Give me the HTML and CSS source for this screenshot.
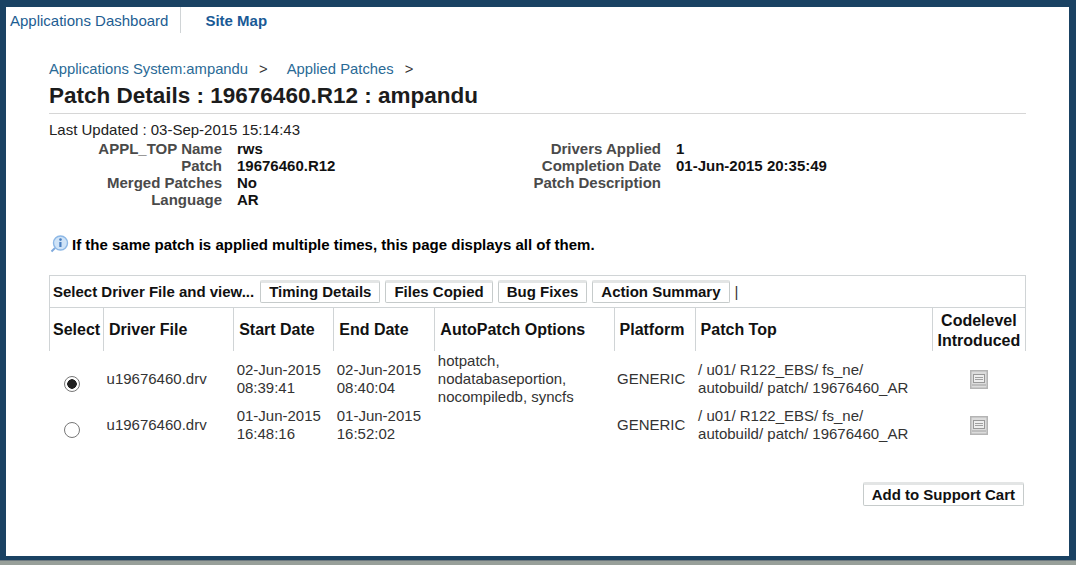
FILE: index.html
```html
<!DOCTYPE html>
<html lang="en">
<head>
<meta charset="utf-8">
<title>Patch Details</title>
<link rel="stylesheet" href="styles.css">
</head>
<body>
<div class="frame">
  <div class="page">
    <nav class="tabs">
      <a class="tab">Applications Dashboard</a>
      <a class="tab tab-active">Site Map</a>
    </nav>
    <main class="content">
      <div class="crumbs"><a>Applications System:ampandu</a><span class="sep">&gt;</span><a>Applied Patches</a><span class="sep">&gt;</span></div>
      <h1 class="title">Patch Details : 19676460.R12 : ampandu</h1>
      <div class="updated">Last Updated : 03-Sep-2015 15:14:43</div>
      <div class="details">
        <span class="lbl">APPL_TOP Name</span><span class="val">rws</span><span class="lbl">Drivers Applied</span><span class="val">1</span>
        <span class="lbl">Patch</span><span class="val">19676460.R12</span><span class="lbl">Completion Date</span><span class="val">01-Jun-2015 20:35:49</span>
        <span class="lbl">Merged Patches</span><span class="val">No</span><span class="lbl">Patch Description</span><span class="val"></span>
        <span class="lbl">Language</span><span class="val">AR</span><span></span><span></span>
      </div>
      <p class="tip">
        <svg class="tip-icon" width="19" height="18" viewBox="0 0 19 18">
          <circle cx="10.5" cy="8" r="7" fill="#cfe3f7" stroke="#8db8e6" stroke-width="1.4"/>
          <path d="M5 13 L1.5 16.5" stroke="#7fa9dc" stroke-width="2" fill="none"/>
          <circle cx="10.5" cy="4.6" r="1.3" fill="#4a7fc0"/>
          <path d="M9.3 7 h2.2 v5 h-2.2z" fill="#4a7fc0"/>
        </svg>
        <span>If the same patch is applied multiple times, this page displays all of them.</span>
      </p>
      <table class="grid">
        <colgroup>
          <col class="c1"><col class="c2"><col class="c3"><col class="c4"><col class="c5"><col class="c6"><col class="c7"><col class="c8">
        </colgroup>
        <thead>
          <tr>
            <td class="bar" colspan="8">
              <div class="bar-row">
                <span class="bar-label">Select Driver File and view...</span>
                <button class="btn">Timing Details</button>
                <button class="btn">Files Copied</button>
                <button class="btn">Bug Fixes</button>
                <button class="btn">Action Summary</button>
                <span class="bar-pipe">|</span>
              </div>
            </td>
          </tr>
          <tr class="head">
            <th>Select</th><th>Driver File</th><th>Start Date</th><th>End Date</th><th>AutoPatch Options</th><th>Platform</th><th>Patch Top</th><th class="center">Codelevel Introduced</th>
          </tr>
        </thead>
        <tbody>
          <tr class="row">
            <td class="center"><input class="radio" type="radio" name="drv" checked></td>
            <td>u19676460.drv</td>
            <td>02-Jun-2015 08:39:41</td>
            <td>02-Jun-2015 08:40:04</td>
            <td>hotpatch, nodatabaseportion, nocompiledb, syncfs</td>
            <td>GENERIC</td>
            <td>/ u01/ R122_EBS/ fs_ne/<br>autobuild/ patch/ 19676460_AR</td>
            <td class="center"><svg class="doc" width="18" height="19" viewBox="0 0 18 19"><rect width="18" height="19" fill="#b4b4b4"/><rect x="1.5" y="1.5" width="15" height="16" fill="#dcdcdc"/><rect x="3.5" y="4.5" width="11" height="8" fill="#eee" stroke="#999"/><path d="M5 7.5h8M5 9.5h8M2 15h14" stroke="#a0a0a0"/></svg></td>
          </tr>
          <tr class="row">
            <td class="center"><input class="radio" type="radio" name="drv"></td>
            <td>u19676460.drv</td>
            <td>01-Jun-2015 16:48:16</td>
            <td>01-Jun-2015 16:52:02</td>
            <td></td>
            <td>GENERIC</td>
            <td>/ u01/ R122_EBS/ fs_ne/<br>autobuild/ patch/ 19676460_AR</td>
            <td class="center"><svg class="doc" width="18" height="19" viewBox="0 0 18 19"><rect width="18" height="19" fill="#b4b4b4"/><rect x="1.5" y="1.5" width="15" height="16" fill="#dcdcdc"/><rect x="3.5" y="4.5" width="11" height="8" fill="#eee" stroke="#999"/><path d="M5 7.5h8M5 9.5h8M2 15h14" stroke="#a0a0a0"/></svg></td>
          </tr>
        </tbody>
      </table>
      <div class="actions"><button class="btn btn-cart">Add to Support Cart</button></div>
    </main>
  </div>
</div>
</body>
</html>
```

FILE: styles.css
```css
html, body {
  margin: 0;
  height: 565px;
  overflow: hidden;
  background: #98a09a;
  font-family: "Liberation Sans", Arial, sans-serif;
}
.frame {
  box-sizing: border-box;
  height: 561px;
  padding: 7px 7px 4px 6px;
  background: #1a4263;
  border-bottom: 1px solid #6e7a80;
}
.page {
  height: 100%;
  background: #fff;
}
.tabs {
  display: flex;
  height: 27px;
  align-items: center;
  padding-left: 4px;
  font-size: 15px;
  color: #1d5d92;
}
.tab {
  display: flex;
  align-items: center;
  height: 26px;
  padding-right: 12px;
  border-right: 1px solid #d0d4d6;
  margin-bottom: 1px;
}
.tab-active {
  padding-left: 24px;
  border-right: 0;
  font-weight: bold;
  color: #1a5a96;
}
.content {
  padding: 27px 43px 0 43px;
}
.crumbs {
  font-size: 14.8px;
  line-height: 17px;
  color: #2a6a96;
}
.sep {
  color: #333;
  margin: 0 19px 0 11px;
}
.title {
  margin: 5px 0 0;
  padding-bottom: 4px;
  border-bottom: 1px solid #d6d6d6;
  font-size: 22.5px;
  line-height: 26px;
  font-weight: bold;
  color: #1c1c1c;
}
.updated {
  margin-top: 7px;
  font-size: 15px;
  line-height: 18px;
  color: #222;
}
.details {
  display: grid;
  grid-template-columns: 173px 249px 160px auto;
  column-gap: 15px;
  margin-top: 1px;
  font-size: 15px;
  line-height: 17px;
  font-weight: bold;
}
.lbl {
  text-align: right;
  color: #4a4a4a;
}
.val {
  color: #111;
}
.tip {
  display: flex;
  align-items: center;
  gap: 3px;
  margin: 26px 0 0 1px;
  height: 20px;
  font-size: 15px;
  font-weight: bold;
  color: #000;
}
.tip-icon {
  flex: none;
}
.grid {
  width: 977px;
  margin-top: 21px;
  border-collapse: collapse;
  table-layout: fixed;
  font-size: 15px;
}
.c1 { width: 54px; }
.c2 { width: 130px; }
.c3 { width: 100px; }
.c4 { width: 101px; }
.c5 { width: 179px; }
.c6 { width: 81px; }
.c7 { width: 237px; }
.c8 { width: 93px; }
.bar {
  height: 31px;
  padding: 0 0 0 3px;
  border: 1px solid #d0d4d6;
}
.bar-row {
  display: flex;
  align-items: center;
  gap: 5px;
}
.bar-label {
  font-weight: bold;
  color: #111;
  margin-right: 1px;
}
.btn {
  box-sizing: border-box;
  height: 23px;
  padding: 0 8px 2px;
  background: #fff;
  border: 1px solid #c6cbcb;
  border-top: 3px solid #e3e5e5;
  border-radius: 2px;
  font-family: inherit;
  font-size: 15px;
  font-weight: bold;
  color: #111;
}
.bar-pipe {
  color: #333;
}
.head th {
  height: 41px;
  padding: 0 5px;
  border-left: 1px solid #d0d4d6;
  text-align: left;
  font-size: 16px;
  line-height: 20px;
  color: #111;
  vertical-align: middle;
}
.head th:first-child {
  padding: 0 3px;
}
.head th:last-child {
  border-right: 1px solid #d0d4d6;
}
.head th.center {
  padding: 2px 2px 0;
  text-align: center;
}
.row td {
  padding: 1px 3px 0;
  line-height: 18px;
  color: #333;
  vertical-align: middle;
}
.row td.center {
  padding: 1px 0 0;
  text-align: center;
}
.radio {
  appearance: none;
  display: block;
  box-sizing: border-box;
  width: 16px;
  height: 16px;
  margin: 10px 0 0 14px;
  border: 1px solid #777;
  border-radius: 50%;
  background: #fff;
}
.radio:checked {
  background: radial-gradient(circle, #222 0 4.5px, #fff 5px);
}
.doc {
  display: block;
  margin: 0 auto;
}
.actions {
  display: flex;
  justify-content: flex-end;
  margin-top: 39px;
  padding-right: 2px;
}
.btn-cart {
  height: 24px;
}
```
